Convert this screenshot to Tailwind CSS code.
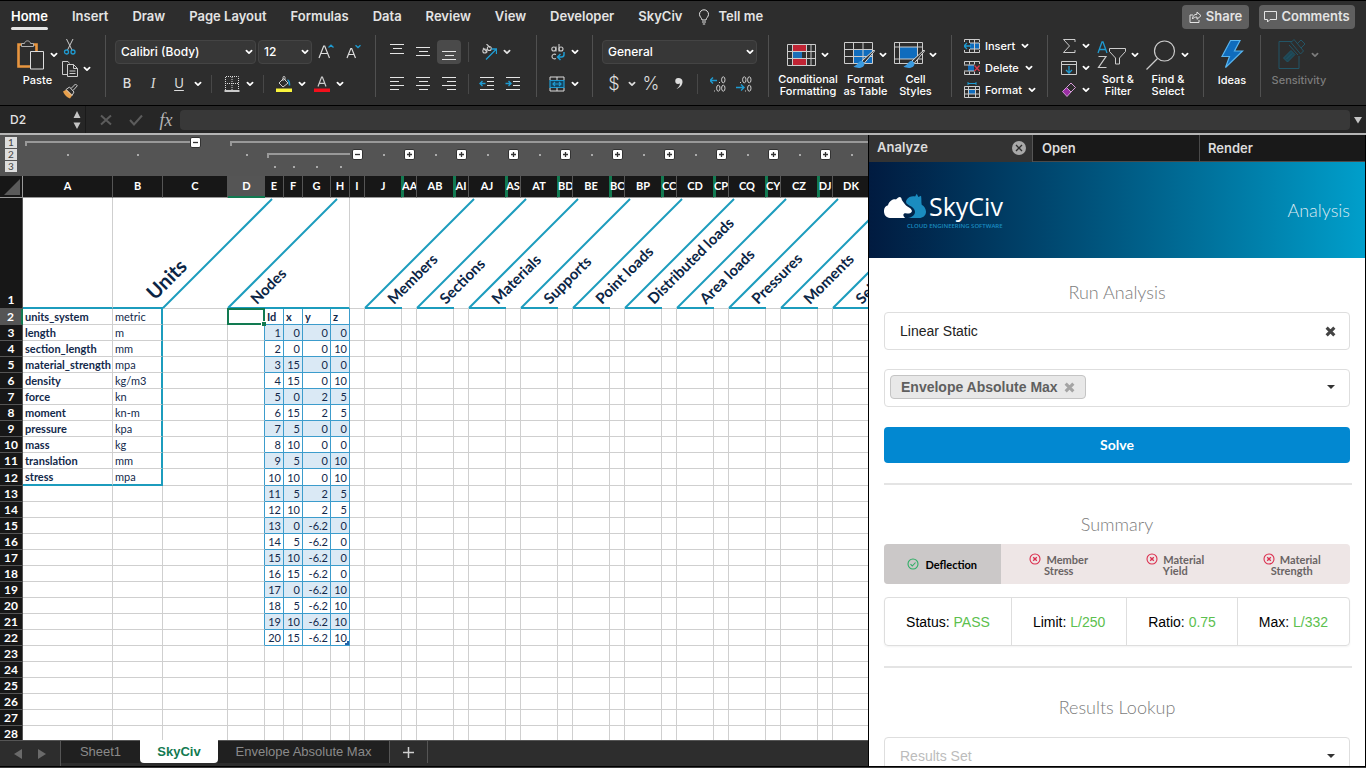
<!DOCTYPE html>
<html lang="en">
<head>
  <meta charset="UTF-8" />
  <meta name="viewport" content="width=device-width, initial-scale=1" />
  <title>SkyCiv Workbook</title>
  <script src="https://cdn.jsdelivr.net/npm/@tailwindcss/browser@4"></script>
</head>
<body class="h-screen flex flex-col overflow-hidden bg-[#2d2d2d] text-[#e4e4e4] font-['Inter','Liberation_Sans',sans-serif]">

  <!-- Shared icons -->
  <svg class="hidden">
    <symbol id="chev" viewBox="0 0 10 10"><path d="M2.4 3.6 5 6.2 7.600 3.600" fill="none" stroke="currentColor" stroke-width="1.700" stroke-linecap="round" stroke-linejoin="round"/></symbol>
    <symbol id="cross" viewBox="0 0 10 10"><path d="M1.500 1.500 8.500 8.500M8.500 1.500 1.500 8.500" fill="none" stroke="currentColor" stroke-width="2.800"/></symbol>
    <symbol id="fail" viewBox="0 0 12 12"><circle cx="6" cy="6" r="5" fill="none" stroke="#db2f4f" stroke-width="1.100"/><path d="M4.200 4.200 7.800 7.800M7.800 4.200 4.200 7.800" stroke="#db2f4f" stroke-width="1.300"/></symbol>
  </svg>

  <!-- Menu tabs -->
  <header class="flex h-[33px] shrink-0 items-center border-t border-black pl-[11px] pr-[11px] text-[13px] font-semibold">
    <nav class="flex items-center gap-6">
      <a href="#" class="relative text-white">Home<span class="absolute left-0 right-0 -bottom-[3px] h-[3px] rounded bg-[#e4e4e4]"></span></a>
      <a href="#">Insert</a>
      <a href="#">Draw</a>
      <a href="#">Page Layout</a>
      <a href="#">Formulas</a>
      <a href="#">Data</a>
      <a href="#">Review</a>
      <a href="#">View</a>
      <a href="#">Developer</a>
      <a href="#">SkyCiv</a>
    </nav>
    <button class="ml-4 flex items-center gap-2">
      <svg class="h-4 w-3" viewBox="0 0 12 16" fill="none" stroke="#e4e4e4"><path d="M4 11C4 9 1.500 8 1.500 5.300a4.500 4.500 0 0 1 9 0C10.500 8 8 9 8 11ZM4 13h4M4.800 15h2.400"/></svg>
      Tell me
    </button>
    <div class="ml-auto flex gap-[10px]">
      <button class="flex h-6 w-[67px] items-center justify-center gap-1 rounded bg-[#5f5f5f]">
        <svg class="h-3 w-[13px]" viewBox="0 0 13 12" fill="none" stroke="#e4e4e4"><path d="M4 4H1v7.500h9V9M8 1v2.200C5 3.400 3.600 5 3.500 8 4.500 6.500 6 6 8 6v2.300l4-3.600Z"/></svg>
        Share
      </button>
      <button class="flex h-6 w-24 items-center justify-center gap-1 rounded bg-[#5f5f5f]">
        <svg class="h-3 w-[13px]" viewBox="0 0 13 12" fill="none" stroke="#e4e4e4"><path d="M.5.5h12v8H6L3.500 11V8.500h-3Z"/></svg>
        Comments
      </button>
    </div>
  </header>

  <!-- Ribbon -->
  <section class="flex h-[73px] shrink-0 border-b border-black pt-[2px] pb-2 text-[11px] font-medium text-white">
    <!-- Clipboard -->
    <div class="flex w-[106px] shrink-0 gap-[6px] border-r border-[#505050] pl-4 pt-1">
      <button class="flex w-10 flex-col">
        <span class="flex h-8 items-center gap-[5px]">
          <svg class="h-8 w-7 shrink-0" viewBox="0 0 28 32" fill="none"><path d="M6.500 5.500H2.500V27.500H14M17 5.500H20.500V12" stroke="#e8953f" stroke-width="2.600"/><path d="M5.500 7.500V4.500H8.500C9 1 14 1 14.500 4.500H17.500V7.500Z" stroke="#b0b0b0" fill="#2d2d2d"/><path d="M14.500 12.500H27.500V30H14.500Z" stroke="#ddd" fill="#2d2d2d"/></svg>
          <svg class="h-[10px] w-[10px] shrink-0"><use href="#chev"/></svg>
        </span>
        <span class="mt-[3px] pl-[3px] leading-3">Paste</span>
      </button>
      <div class="flex flex-col gap-[6px]">
        <button aria-label="Cut"><svg class="h-4 w-4" viewBox="0 0 16 16" fill="none"><path d="M4.500 0 10 11M11 0 5.500 11" stroke="#ccc"/><circle cx="4.500" cy="13" r="2" stroke="#1f9bd1" stroke-width="1.300"/><circle cx="11" cy="13" r="2" stroke="#1f9bd1" stroke-width="1.300"/></svg></button>
        <button aria-label="Copy" class="flex items-center gap-1"><svg class="h-4 w-4" viewBox="0 0 16 16" fill="none" stroke="#ccc"><path d="M5 13.500H.5V.5h5.500l1.500 2"/><path d="M5.500 3.500h6L15.500 7.500v8h-10ZM11.500 3.500v4h4M7.500 10h6M7.500 12.500h6" /></svg><svg class="h-[10px] w-[10px]"><use href="#chev"/></svg></button>
        <button aria-label="Format painter"><svg class="h-4 w-4" viewBox="0 0 16 16" fill="none"><path d="M1 8.500 4.500 6.500 10.500 12 8 15.500C5 14.500 2.500 12 1 8.500Z" fill="#e8a04c"/><path d="M4 6.500 7.500 4 12 9 10 12.500ZM9 5.500 13.500 1 15.300 2.800 11 7.500" stroke="#ccc"/></svg></button>
      </div>
    </div>

    <!-- Font -->
    <div class="flex w-[270px] shrink-0 flex-col gap-2 border-r border-[#505050] pl-[9px] pt-[5px]">
      <div class="flex h-6 items-center">
        <div class="relative">
          <select aria-label="Font" class="h-6 w-[141px] appearance-none rounded-sm border border-[#444] bg-[#373737] pl-[5px] text-xs"><option>Calibri (Body)</option></select>
          <svg class="pointer-events-none absolute right-[2px] top-[7px] h-[10px] w-[10px]"><use href="#chev"/></svg>
        </div>
        <div class="relative ml-[2px]">
          <select aria-label="Font size" class="h-6 w-[54px] appearance-none rounded-sm border border-[#444] bg-[#373737] pl-[5px] text-xs"><option>12</option></select>
          <svg class="pointer-events-none absolute right-[2px] top-[7px] h-[10px] w-[10px]"><use href="#chev"/></svg>
        </div>
        <button aria-label="Increase font" class="ml-[6px]"><svg class="h-5 w-4" viewBox="0 0 16 20" fill="none"><path d="M1 16 5.700 4h1L11.500 16M3 11.500h6.500" stroke="#ddd" stroke-width="1.200"/><path d="M10.500 5.500 13 3.200l2.500 2.300" stroke="#1f9bd1" stroke-width="1.300"/></svg></button>
        <button aria-label="Decrease font" class="ml-3"><svg class="h-5 w-4" viewBox="0 0 16 20" fill="none"><path d="M1 16 4.800 6.500h.9L9.500 16M2.500 12.500h5.500" stroke="#ddd" stroke-width="1.200"/><path d="M9.500 3.200 12 5.500l2.500-2.300" stroke="#1f9bd1" stroke-width="1.300"/></svg></button>
      </div>
      <div class="flex h-6 items-center">
        <button class="w-6 text-[13px] text-[#ddd]">B</button>
        <button class="w-7 font-['Liberation_Serif',serif] text-sm italic text-[#ddd]">I</button>
        <button class="w-6 text-[13px] font-normal text-[#ddd] underline underline-offset-2">U</button>
        <button aria-label="Underline styles" class="ml-[2px]"><svg class="h-[10px] w-[10px]"><use href="#chev"/></svg></button>
        <span class="ml-2 mr-3 h-[18px] w-px bg-[#484848]"></span>
        <button aria-label="Borders" class="flex items-center gap-[5px]"><svg class="h-4 w-4" viewBox="0 0 16 16" fill="none"><path d="M1.500 14V.5h13V14M8 1v13M1 7.500h14" stroke="#ddd" stroke-dasharray="1 1"/><path d="M.5 15h15" stroke="#fff" stroke-width="1.500"/></svg><svg class="h-[10px] w-[10px]"><use href="#chev"/></svg></button>
        <span class="ml-2 mr-3 h-[18px] w-px bg-[#484848]"></span>
        <button aria-label="Fill colour" class="flex items-center gap-[5px]"><svg class="h-4 w-4" viewBox="0 0 16 16" fill="none"><path d="M0 12.500h16v3.500H0Z" fill="#f9f43c"/><path d="M3 7 7.500 2.500 12 7 7 11ZM7 5V1.500c0-1.500 2-1.500 2 0V4" stroke="#ccc"/><path d="M11.500 4c2 .5 2 3 2 5.500" stroke="#1f9bd1" stroke-width="1.600"/></svg><svg class="h-[10px] w-[10px]"><use href="#chev"/></svg></button>
        <button aria-label="Font colour" class="ml-[7px] flex items-center gap-[5px]"><svg class="h-4 w-4" viewBox="0 0 16 16" fill="none"><path d="M0 12.500h16v3.500H0Z" fill="#f3101c"/><path d="M4 10.500 7.600 1h.8L12 10.500M5.300 7.300h5.400" stroke="#ccc" stroke-width="1.200"/></svg><svg class="h-[10px] w-[10px]"><use href="#chev"/></svg></button>
      </div>
    </div>

    <!-- Alignment -->
    <div class="flex w-[161px] shrink-0 flex-col gap-2 border-r border-[#505050] pl-[9px] pt-[5px] text-[#e4e4e4]">
      <div class="flex h-6 items-center gap-[2px]">
        <button aria-label="Top align" class="h-6 w-6"><svg class="h-6 w-6" viewBox="0 0 24 24"><path d="M5 4.500h14M8 8.500h9M5 13.500h14" stroke="currentColor"/></svg></button>
        <button aria-label="Middle align" class="h-6 w-6"><svg class="h-6 w-6" viewBox="0 0 24 24"><path d="M5 7.500h14M8 11.500h9M5 15.500h14" stroke="currentColor"/></svg></button>
        <button aria-label="Bottom align" class="h-6 w-6 rounded-sm bg-[#4a4a4a]"><svg class="h-6 w-6" viewBox="0 0 24 24"><path d="M5 11.500h14M8 15.500h9M5 19.500h14" stroke="currentColor"/></svg></button>
        <span class="ml-[5px] mr-[10px] h-5 w-px bg-[#484848]"></span>
        <button aria-label="Orientation" class="flex items-center gap-[5px]"><svg class="h-4 w-4" viewBox="0 0 16 16" fill="none"><g stroke="#ccc" stroke-width="1.100"><circle cx="3.800" cy="7" r="2"/><path d="M2 3.800 6.300 8.300"/><circle cx="8.300" cy="4.500" r="2"/><path d="M5.500 0 9 3.500"/></g><path d="M5 15.500 15 5.500M10.500 5h5v5" stroke="#1f9bd1" stroke-width="1.300"/></svg><svg class="h-[10px] w-[10px]"><use href="#chev"/></svg></button>
      </div>
      <div class="flex h-6 items-center gap-[2px]">
        <button aria-label="Align left" class="h-6 w-6"><svg class="h-6 w-6" viewBox="0 0 24 24"><path d="M5 5.500h14M5 9.500h9M5 13.500h14M5 17.500h9" stroke="currentColor"/></svg></button>
        <button aria-label="Center" class="h-6 w-6"><svg class="h-6 w-6" viewBox="0 0 24 24"><path d="M5 5.500h14M8 9.500h9M5 13.500h14M8 17.500h9" stroke="currentColor"/></svg></button>
        <button aria-label="Align right" class="h-6 w-6"><svg class="h-6 w-6" viewBox="0 0 24 24"><path d="M5 5.500h14M10 9.500h9M5 13.500h14M10 17.500h9" stroke="currentColor"/></svg></button>
        <span class="ml-[5px] mr-1 h-5 w-px bg-[#484848]"></span>
        <button aria-label="Decrease indent" class="h-6 w-6"><svg class="h-6 w-6" viewBox="0 0 24 24" fill="none"><path d="M5 5.500h14M12 9.500h7M12 13.500h7M5 17.500h14" stroke="currentColor"/><path d="M5 11.500h5.500M7.500 9 5 11.500 7.500 14" stroke="#1f9bd1" stroke-width="1.400"/></svg></button>
        <button aria-label="Increase indent" class="h-6 w-6"><svg class="h-6 w-6" viewBox="0 0 24 24" fill="none"><path d="M5 5.500h14M12 9.500h7M12 13.500h7M5 17.500h14" stroke="currentColor"/><path d="M4.500 11.500H10M7.500 9 10 11.500 7.500 14" stroke="#1f9bd1" stroke-width="1.400"/></svg></button>
      </div>
    </div>

    <!-- Wrap and merge -->
    <div class="flex w-[56px] shrink-0 flex-col gap-2 border-r border-[#505050] pl-3 pt-[5px]">
      <button aria-label="Wrap text" class="flex h-6 items-center gap-[5px]"><svg class="h-[18px] w-4" viewBox="0 0 16 18" fill="none"><g stroke="#ccc" stroke-width="1.100"><circle cx="4.800" cy="6" r="2"/><path d="M7 3.500V8.500M10 1v7.500"/><circle cx="12" cy="6" r="2"/><path d="M7 11.500c-2-1-4 0-4 2s2 3 4 2"/></g><path d="M15 9v2.500c0 1.500-1 2.500-2.500 2.500H8.500M11.500 11 8.500 14l3 3" stroke="#1f9bd1" stroke-width="1.500"/></svg><svg class="h-[10px] w-[10px]"><use href="#chev"/></svg></button>
      <button aria-label="Merge" class="flex h-6 items-center gap-[5px]"><svg class="h-4 w-4" viewBox="0 0 16 16" fill="none"><path d="M1 4.500h14v7H1Z" fill="#15455f"/><path d="M1 4V1h14v3M8 1v3M1 12v3h14v-3M8 12v3" stroke="#ddd"/><path d="M1 4.500h14v7H1ZM4 8h8M6 6 4 8l2 2M10 6l2 2-2 2" stroke="#1f9bd1" stroke-width="1.200"/></svg><svg class="h-[10px] w-[10px]"><use href="#chev"/></svg></button>
    </div>

    <!-- Number -->
    <div class="flex w-[176px] shrink-0 flex-col gap-2 border-r border-[#505050] pl-[9px] pt-[5px]">
      <div class="relative w-[155px]">
        <select aria-label="Number format" class="h-6 w-full appearance-none rounded-sm border border-[#444] bg-[#373737] pl-[5px] text-xs"><option>General</option></select>
        <svg class="pointer-events-none absolute right-[2px] top-[7px] h-[10px] w-[10px]"><use href="#chev"/></svg>
      </div>
      <div class="flex h-6 items-center font-normal text-[#ddd]">
        <button class="w-6 text-lg font-light">$</button>
        <button aria-label="Currencies" class="ml-[1px]"><svg class="h-[10px] w-[10px]"><use href="#chev"/></svg></button>
        <button class="ml-[3px] w-[22px] text-lg font-light">%</button>
        <button aria-label="Comma style" class="ml-[9px]"><svg class="h-4 w-4" viewBox="0 0 16 16"><path d="M7.500 2A3 3 0 0 0 7 8c1 0 1.500-.2 2-.5C8.800 9.500 8 11 5.500 13c3.500-1.200 6-4 6-7.300C11.500 3.200 9.800 2 7.500 2Z" fill="#ddd"/></svg></button>
        <span class="ml-[10px] mr-3 h-5 w-px bg-[#484848]"></span>
        <button aria-label="Increase decimal"><svg class="h-4 w-4" viewBox="0 0 16 16" fill="none"><path d="M0 4.500h7M3 1.500 0 4.500l3 3" stroke="#1f9bd1" stroke-width="1.400"/><g stroke="#ccc"><ellipse cx="13.300" cy="3.800" rx="1.700" ry="3"/><ellipse cx="8.300" cy="12.200" rx="1.700" ry="3"/><ellipse cx="13.300" cy="12.200" rx="1.700" ry="3"/><path d="M9 6.500h1M4 15h1"/></g></svg></button>
        <button aria-label="Decrease decimal" class="ml-[10px]"><svg class="h-4 w-4" viewBox="0 0 16 16" fill="none"><path d="M0 11.500h8M5 8.500l3 3-3 3" stroke="#1f9bd1" stroke-width="1.400"/><g stroke="#ccc"><ellipse cx="8.300" cy="3.800" rx="1.700" ry="3"/><ellipse cx="13.300" cy="3.800" rx="1.700" ry="3"/><ellipse cx="13.300" cy="12.200" rx="1.700" ry="3"/><path d="M4 6.500h1M9 15h1"/></g></svg></button>
      </div>
    </div>

    <!-- Styles -->
    <div class="flex w-[183px] shrink-0 gap-[3px] border-r border-[#505050] pl-2 pt-1">
      <button class="flex w-[62px] flex-col items-center">
        <span class="flex h-8 items-center gap-1">
          <svg class="h-[22px] w-[29px]" viewBox="0 0 29 22" fill="none"><path d="M6 1h13v6H6ZM6 15h13v6H6Z" fill="#c02434"/><path d="M6 8h9v6H6Z" fill="#1b6fb8"/><path d="M.5.5h28v21H.5ZM.5 7.500h28M.5 14.500h28M5.500.5v21M19.500.5v21M24 .5v21" stroke="#ccc"/></svg>
          <svg class="h-[10px] w-[10px]"><use href="#chev"/></svg>
        </span>
        <span class="mt-[3px] leading-3">Conditional<br>Formatting</span>
      </button>
      <button class="flex w-[47px] flex-col items-center">
        <span class="flex h-8 items-center gap-[3px]">
          <svg class="h-7 w-[31px]" viewBox="0 0 31 28" fill="none"><path d="M10 9h18v14H10Z" fill="#0f6cbd"/><path d="M.5 1.500h28v21H.5ZM.5 8.500h28M.5 15.500h28M9.500 1.500v21M19 1.500v21" stroke="#ccc"/><path d="M30 9 18 20l2 2.500L30.500 10Z" fill="#2d2d2d" stroke="#ddd"/><path d="M18.500 20c-4-1-4 4-9 5.500 4 2.500 11 2 11-3Z" fill="#3b9be0"/></svg>
          <svg class="h-[10px] w-[10px]"><use href="#chev"/></svg>
        </span>
        <span class="mt-[3px] leading-3 whitespace-nowrap">Format<br>as Table</span>
      </button>
      <button class="flex w-[47px] flex-col items-center">
        <span class="flex h-8 items-center gap-[3px]">
          <svg class="h-7 w-[31px]" viewBox="0 0 31 28" fill="none"><path d="M6 6h17v12H6Z" fill="#0f6cbd"/><path d="M.5 1.500h28v21H.5ZM.5 6h28M.5 18h28M5.500 1.500v21M23.500 1.500v21" stroke="#ccc"/><path d="M30 9 18 20l2 2.500L30.500 10Z" fill="#2d2d2d" stroke="#ddd"/><path d="M18.500 20c-4-1-4 4-9 5.500 4 2.500 11 2 11-3Z" fill="#3b9be0"/></svg>
          <svg class="h-[10px] w-[10px]"><use href="#chev"/></svg>
        </span>
        <span class="mt-[3px] leading-3">Cell<br>Styles</span>
      </button>
    </div>

    <!-- Cells -->
    <div class="flex w-24 shrink-0 flex-col gap-[6px] border-r border-[#505050] pl-3 pt-[3px]">
      <button class="flex h-4 items-center gap-[5px]"><svg class="h-4 w-4" viewBox="0 0 16 16" fill="none"><path d="M6 5h10v6H6Z" fill="#0f6cbd"/><path d="M.5 4V1.500h15V4M5.500 1.500V5M10.500 1.500V5M.5 12v2.500h15V12M5.500 11v3.500M10.500 11v3.500M6 5h9.500v6H6M10.500 5v6" stroke="#ccc"/><path d="M0 8h7M3 5 0 8l3 3" stroke="#1f9bd1" stroke-width="1.300"/></svg>Insert<svg class="h-[10px] w-[10px]"><use href="#chev"/></svg></button>
      <button class="flex h-4 items-center gap-[5px]"><svg class="h-4 w-4" viewBox="0 0 16 16" fill="none"><path d="M4 5h6v6H4Z" fill="#0f6cbd"/><path d="M.5 4.500V1.500h15V4M5.500 1.500v3M10.500 1.500v3M.5 11.500v3h15V12M5.500 11.500v3M10.500 11.500v3M0 5h10M0 11h10" stroke="#ccc"/><path d="M10.500 5.500 15.500 11M15.500 5.500 10.500 11" stroke="#d83b4e" stroke-width="1.300"/></svg>Delete<svg class="h-[10px] w-[10px]"><use href="#chev"/></svg></button>
      <button class="flex h-4 items-center gap-[5px]"><svg class="h-4 w-4" viewBox="0 0 16 16" fill="none"><path d="M4 7h7v5H4Z" fill="#0f6cbd"/><path d="M.5 4.500h15v11H.5ZM.5 7.500h15M.5 12h15M4.500 4.500v11M11.500 4.500v11" stroke="#ccc"/><path d="M4 1.500h8M4 0v3M12 0v3" stroke="#1f9bd1"/></svg>Format<svg class="h-[10px] w-[10px]"><use href="#chev"/></svg></button>
    </div>

    <!-- Editing -->
    <div class="flex w-[156px] shrink-0 border-r border-[#505050] pl-[13px]">
      <div class="flex flex-col gap-[6px] pt-[3px]">
        <button aria-label="AutoSum" class="flex h-4 items-center gap-1"><svg class="h-4 w-4" viewBox="0 0 16 16" fill="none"><path d="M14 4V1.500H2.500L8.500 8l-6 6.500H14V12" stroke="#ccc"/></svg><svg class="h-[10px] w-[10px]"><use href="#chev"/></svg></button>
        <button aria-label="Fill" class="flex h-4 items-center gap-1"><svg class="h-4 w-4" viewBox="0 0 16 16" fill="none"><path d="M.5 1.500h15v13H.5ZM.5 4.500h15" stroke="#ccc"/><path d="M8 6v6.500M5 10l3 3 3-3" stroke="#1f9bd1" stroke-width="1.300"/></svg><svg class="h-[10px] w-[10px]"><use href="#chev"/></svg></button>
        <button aria-label="Clear" class="flex h-4 items-center gap-1"><svg class="h-4 w-4" viewBox="0 0 16 16" fill="none" stroke="#d59ad8"><path d="M1.500 9.500 5.500 5.500 10 10 6 14.500Z" fill="#9b2fa5"/><path d="M5.500 5.500 10 1l4.500 4.500L10 10"/></svg><svg class="h-[10px] w-[10px]"><use href="#chev"/></svg></button>
      </div>
      <button class="ml-[2px] flex w-[50px] flex-col items-center pt-1">
        <span class="flex h-8 items-center gap-1">
          <svg class="h-7 w-[29px]" viewBox="0 0 29 28" fill="none"><path d="M1 12 5 1h1l4 11M2.500 8.500h6" stroke="#1f9bd1" stroke-width="1.300"/><path d="M1.500 15.500H9L1.500 26.500H9.500" stroke="#ccc" stroke-width="1.200"/><path d="M12.500 7.500h16v3L22.500 17v6h-4v-6l-6-6.500Z" stroke="#ccc"/></svg>
          <svg class="h-[10px] w-[10px]"><use href="#chev"/></svg>
        </span>
        <span class="mt-[3px] leading-3 whitespace-nowrap">Sort &amp;<br>Filter</span>
      </button>
      <button class="flex w-[50px] flex-col items-center pt-1">
        <span class="flex h-8 items-center gap-1">
          <svg class="h-[30px] w-[30px]" viewBox="0 0 30 30" fill="none" stroke="#ccc" stroke-width="1.200"><circle cx="18.500" cy="11" r="10"/><path d="M11.500 18.500.5 29.500"/></svg>
          <svg class="h-[10px] w-[10px]"><use href="#chev"/></svg>
        </span>
        <span class="mt-[3px] leading-3 whitespace-nowrap">Find &amp;<br>Select</span>
      </button>
    </div>

    <!-- Ideas -->
    <div class="flex w-[57px] shrink-0 justify-center border-r border-[#505050] pt-1">
      <button class="flex flex-col items-center">
        <svg class="h-8 w-6" viewBox="0 0 24 32"><path d="M10.500 1.500H20L14.500 12H22.500L5.500 28.500 9.500 17.500H2Z" fill="#0f6cbd" stroke="#58b4ee" stroke-width="1.200"/></svg>
        <span class="mt-[3px] leading-3">Ideas</span>
      </button>
    </div>

    <!-- Sensitivity -->
    <div class="flex w-[76px] shrink-0 justify-center pt-1 text-[#7c7c7c]">
      <button class="flex flex-col items-center" disabled>
        <span class="flex h-8 items-center gap-1">
          <svg class="h-8 w-7" viewBox="0 0 28 32" fill="none" stroke="#235566"><path d="M14 2.500H1V29.500H21V17"/><path d="M5.500 19 13 11.500l4 4L9.500 23ZM8.500 20 14 14.500" fill="#1d4654"/><path d="M13 3.500 16 .5 25.500 12l-3 3ZM19 5l4-4 4 4-4 4M11 6l9 10" /></svg>
          <svg class="h-[10px] w-[10px]"><use href="#chev"/></svg>
        </span>
        <span class="mt-[3px] leading-3">Sensitivity</span>
      </button>
    </div>
  </section>

  <!-- Formula bar -->
  <section class="flex h-[27px] shrink-0 items-center bg-[#262626]">
    <div class="flex h-full w-[86px] items-center justify-between border-r border-[#1a1a1a] pl-[10px] pr-1">
      <input aria-label="Name box" value="D2" class="w-12 text-xs font-medium" />
      <svg class="h-5 w-2" viewBox="0 0 8 20" fill="#c4c4c4"><path d="M4 1 7.500 8h-7ZM4 19 .5 12.500h7Z"/></svg>
    </div>
    <button aria-label="Cancel" class="ml-3"><svg class="h-4 w-4" viewBox="0 0 16 16"><path d="M3 3.500 13 12.500M13 3.500 3 12.500" stroke="#5c5c5c" stroke-width="2"/></svg></button>
    <button aria-label="Enter" class="ml-[14px]"><svg class="h-4 w-4" viewBox="0 0 16 16" fill="none"><path d="M2 8 6 12.500 14 3.500" stroke="#5c5c5c" stroke-width="2"/></svg></button>
    <button class="ml-[10px] mr-[2px] w-6 font-['Liberation_Serif',serif] text-lg leading-4 italic text-[#b4b4b4]">fx</button>
    <input aria-label="Formula" class="h-5 flex-1 rounded-sm bg-[#383838]" />
    <button aria-label="Expand formula bar" class="w-4 pl-[3px]"><svg class="h-2 w-[10px]" viewBox="0 0 10 8"><path d="M1 1h8L5 7.500Z" fill="#c4c4c4"/></svg></button>
  </section>

  <main class="flex min-h-0 flex-1 border-t-2 border-[#b5b5b5] font-['Lato','Liberation_Sans',sans-serif]">

    <!-- Spreadsheet -->
    <section class="flex min-w-0 flex-1 flex-col overflow-hidden bg-white">
      <div class="flex h-[41px] shrink-0 bg-[#545454]">
        <div class="flex w-[23px] shrink-0 flex-col gap-px pl-[5px] pt-[2px]">
          <button class="h-[11px] w-3 bg-[#dedede] text-[10px] leading-[11px] text-[#444]">1</button>
          <button class="h-[11px] w-3 bg-[#dedede] text-[10px] leading-[11px] text-[#444]">2</button>
          <button class="h-[11px] w-3 bg-[#dedede] text-[10px] leading-[11px] text-[#444]">3</button>
        </div>
        <div id="outline" class="flex min-w-0 flex-1 flex-col overflow-hidden pt-[2px]"></div>
      </div>
      <div class="min-h-0 flex-1 overflow-hidden">
        <table id="sheet" class="table-fixed border-separate border-spacing-0 text-[#12294b]"></table>
      </div>
      <!-- Sheet tabs -->
      <div class="flex h-[26px] shrink-0 border-t border-[#555] bg-[#2d2d2d] font-['Liberation_Sans',sans-serif] text-[13px] text-[#8a8a8a]">
        <div class="flex w-[61px] items-center gap-4 border-r border-[#555] pl-[14px]">
          <button aria-label="Previous sheet"><svg class="h-[10px] w-2" viewBox="0 0 8 10"><path d="M8 0v10L0 5Z" fill="#6a6a6a"/></svg></button>
          <button aria-label="Next sheet"><svg class="h-[10px] w-2" viewBox="0 0 8 10"><path d="M0 0v10l8-5Z" fill="#6a6a6a"/></svg></button>
        </div>
        <button class="h-[22px] w-[79px] bg-[#202020]">Sheet1</button>
        <button class="-mt-px h-[23px] w-[78px] rounded-b-sm bg-white font-bold text-[#127a51]">SkyCiv</button>
        <button class="h-[22px] w-[172px] border-r border-[#555] bg-[#202020]">Envelope Absolute Max</button>
        <button aria-label="Add sheet" class="flex h-[22px] w-[38px] items-center justify-center border-r border-[#555]"><svg class="h-[11px] w-[11px]" viewBox="0 0 11 11"><path d="M5.500 0v11M0 5.500h11" stroke="#d0d0d0" stroke-width="1.500"/></svg></button>
      </div>
    </section>

    <!-- Task pane -->
    <aside class="flex w-[498px] shrink-0 flex-col overflow-hidden border-x border-black bg-white text-[#222]">
      <nav class="flex h-[27px] shrink-0 bg-[#191919] font-['Inter',sans-serif] text-[13px] font-semibold text-[#dcdcdc]">
        <div class="flex w-[164px] items-start justify-between border-r border-[#555] bg-[#333] pl-2 pr-[6px]">
          <button class="leading-6">Analyze</button>
          <button aria-label="Close Analyze" class="pt-[6px]"><svg class="h-[14px] w-[14px]" viewBox="0 0 14 14"><circle cx="7" cy="7" r="7" fill="#a8a8a8"/><path d="M4 4l6 6M10 4l-6 6" stroke="#2d2d2d" stroke-width="1.300"/></svg></button>
        </div>
        <button class="flex-1 border-b border-[#4a4a4a] pl-[9px] text-left leading-6">Open</button>
        <button class="flex-1 border-b border-l border-[#4a4a4a] pl-2 text-left leading-6">Render</button>
      </nav>
      <header class="flex h-24 shrink-0 items-center justify-between bg-linear-to-r from-[#011b40] to-[#009fcb] px-[15px]">
        <div class="flex flex-col">
          <div class="flex items-center gap-[2px]">
            <svg class="h-[26px] w-[43px]" viewBox="54 188 130 76"><path d="M72 262C50 262 48 228 66 224 70 208 84 204 90 206L97 200C103 196 107 200 108 208 114 216 118 224 126 228 136 233 142 240 136 246 130 252 122 246 117 248 110 250 112 258 118 262Z" fill="#fff"/><path d="M122 208C128 197 140 195 148 197L153 189 158 199 166 195C168 206 166 212 168 222 184 230 188 258 164 262L126 262C146 260 154 244 142 232 133 223 116 222 122 208Z" fill="#1a8cc0"/></svg>
            <span class="font-['Open_Sans',sans-serif] text-[25px] leading-8 text-white">SkyCiv</span>
          </div>
          <span class="pl-[23px] font-['Open_Sans',sans-serif] text-[6px] leading-[8px] font-semibold text-[#1a8cc0]">CLOUD ENGINEERING SOFTWARE</span>
        </div>
        <span class="text-lg font-light text-[#dbe9f2]">Analysis</span>
      </header>
      <form class="flex flex-col px-[15px]">
        <h2 class="mt-5 text-center text-lg leading-7 font-light text-[#7c7c7c]">Run Analysis</h2>
        <div class="mt-[6px] flex h-[38px] items-center rounded border border-[#dedede] px-[13px] pl-[15px] font-['Liberation_Sans',sans-serif] text-sm">
          <input aria-label="Analysis type" value="Linear Static" class="flex-1" />
          <button type="button" aria-label="Clear analysis type"><svg class="h-[11px] w-[11px] text-[#444]"><use href="#cross"/></svg></button>
        </div>
        <div class="mt-[19px] flex h-[38px] items-center justify-between rounded border border-[#dedede] pl-[5px] pr-[14px] pb-[2px] font-['Liberation_Sans',sans-serif]">
          <span class="flex h-6 items-center gap-[6px] rounded-sm border border-[#c4c4c4] bg-[#e8e8e8] px-[10px] text-sm font-bold text-[#5f5f5f]">Envelope Absolute Max
            <button type="button" aria-label="Remove"><svg class="h-[11px] w-[11px] text-[#a4a4a4]"><use href="#cross"/></svg></button>
          </span>
          <button type="button" aria-label="Open list"><svg class="h-1 w-2" viewBox="0 0 8 4"><path d="M0 0h8L4 4Z" fill="#333"/></svg></button>
        </div>
        <button type="button" class="mt-5 h-9 rounded bg-[#0288d1] text-sm font-bold text-white">Solve</button>
        <hr class="mt-5 -mr-[2px] border-t-2 border-[#e4e4e4]" />

        <h2 class="mt-[25px] text-center text-lg leading-7 font-light text-[#7c7c7c]">Summary</h2>
        <div class="mt-[6px] flex h-10 overflow-hidden rounded bg-[#eee6e6] text-[11px] leading-[11px] font-bold text-[#6a6464]">
          <button type="button" class="flex flex-1 items-center justify-center gap-[6px] bg-[#cbc8c8] text-black"><svg class="h-3 w-3" viewBox="0 0 12 12" fill="none" stroke="#2fae66" stroke-width="1.100"><circle cx="6" cy="6" r="5"/><path d="M3.500 6.200 5.300 8 8.500 4.500"/></svg>Deflection</button>
          <button type="button" class="flex-1"><svg class="mr-[5px] inline h-3 w-3 align-[-1px]"><use href="#fail"/></svg>Member<br>Stress</button>
          <button type="button" class="flex-1"><svg class="mr-[5px] inline h-3 w-3 align-[-1px]"><use href="#fail"/></svg>Material<br>Yield</button>
          <button type="button" class="flex-1"><svg class="mr-[5px] inline h-3 w-3 align-[-1px]"><use href="#fail"/></svg>Material<br>Strength</button>
        </div>
        <div class="mt-[13px] overflow-hidden rounded border border-[#dedede] shadow-xs">
          <table class="w-full text-center font-['Liberation_Sans',sans-serif] text-sm text-black">
            <tr class="h-[47px]">
              <td class="border-r border-[#dedede] px-5">Status: <span class="text-[#5cc04e]">PASS</span></td>
              <td class="border-r border-[#dedede] px-5">Limit: <span class="text-[#5cc04e]">L/250</span></td>
              <td class="border-r border-[#dedede] px-5">Ratio: <span class="text-[#5cc04e]">0.75</span></td>
              <td class="px-5">Max: <span class="text-[#5cc04e]">L/332</span></td>
            </tr>
          </table>
        </div>
        <hr class="mt-5 -mr-[2px] border-t-2 border-[#e4e4e4]" />

        <h2 class="mt-[25px] text-center text-lg leading-7 font-light text-[#7c7c7c]">Results Lookup</h2>
        <div class="relative mt-4">
          <select aria-label="Results set" class="h-[38px] w-full appearance-none rounded border border-[#dedede] px-[15px] font-['Liberation_Sans',sans-serif] text-sm text-[#bcbcbc]"><option>Results Set</option></select>
          <svg class="pointer-events-none absolute right-[15px] top-[17px] h-1 w-2" viewBox="0 0 8 4"><path d="M0 0h8L4 4Z" fill="#333"/></svg>
        </div>
      </form>
    </aside>
  </main>
  <div class="h-[2px] shrink-0 border-t border-black bg-[#3a3a3a]"></div>

  <script>
    // columns: name and width, title = slanted title, hidden = columns are folded before it
    const cols = [
      { n: 'A', w: 90 }, { n: 'B', w: 50 }, { n: 'C', w: 65, title: 'Units', big: true }, { n: 'D', w: 37, title: 'Nodes' },
      { n: 'E', w: 19 }, { n: 'F', w: 19 }, { n: 'G', w: 28 }, { n: 'H', w: 19 }, { n: 'I', w: 15 },
    ]
    const groups = [
      ['J', 'Members', 'AA'], ['AB', 'Sections', 'AI'], ['AJ', 'Materials', 'AS'], ['AT', 'Supports', 'BD'],
      ['BE', 'Point loads', 'BO'], ['BP', 'Distributed loads', 'CC'], ['CD', 'Area loads', 'CP'],
      ['CQ', 'Pressures', 'CY'], ['CZ', 'Moments', 'DJ'], ['DK', 'Self weight'],
    ]
    groups.forEach(([n, title, next]) => {
      cols.push({ n, w: 37, title, group: true })
      if (next) cols.push({ n: next, w: 15, hidden: true })
    })

    const units = [
      ['units_system', 'metric'], ['length', 'm'], ['section_length', 'mm'], ['material_strength', 'mpa'],
      ['density', 'kg/m3'], ['force', 'kn'], ['moment', 'kn-m'], ['pressure', 'kpa'], ['mass', 'kg'],
      ['translation', 'mm'], ['stress', 'mpa'],
    ]
    const nodes = [
      [0, 0, 0], [0, 0, 10], [15, 0, 0], [15, 0, 10], [0, 2, 5], [15, 2, 5], [5, 0, 0], [10, 0, 0], [5, 0, 10], [10, 0, 10],
      [5, 2, 5], [10, 2, 5], [0, -6.2, 0], [5, -6.2, 0], [10, -6.2, 0], [15, -6.2, 0], [0, -6.2, 10], [5, -6.2, 10], [10, -6.2, 10], [15, -6.2, 10],
    ]

    // outline levels above the columns
    const line = '<span class="mt-[4px] h-[5px] flex-1 border-t-2 border-[#999]"></span>'
    const start = '<span class="ml-[2px] mt-[4px] h-[5px] flex-1 border-t-2 border-l-2 border-[#999]"></span>'
    const dot = '<span class="mx-auto mt-[5px] h-[2px] w-[2px] bg-[#aaa]"></span>'
    const blank = '<span class="flex-1"></span>'
    const fold = (plus) => `<button aria-label="${plus ? 'Expand' : 'Collapse'}" class="h-[11px] w-[11px] shrink-0 rounded-xs border border-[#333] bg-white"><svg class="h-[9px] w-[9px]" viewBox="0 0 9 9"><path d="${plus ? 'M2 4.500h5M4.500 2v5' : 'M2 4.500h5'}" stroke="#333" stroke-width="1.300"/></svg></button>`

    function outlineCell(level, c, i) {
      if (level === 1) {
        if (c.n === 'A' || c.n === 'D') return start
        if (c.n === 'C') return line + fold(false) + blank
        return line
      }
      if (level === 2) {
        if (c.n === 'A' || c.n === 'B' || c.n === 'D' || c.group) return dot
        if (c.n === 'E') return start
        if (i > 4 && i < 8) return line
        if (c.n === 'I') return blank + fold(false) + blank
        if (c.hidden) return blank + fold(true) + blank
      }
      if (level === 3 && i > 3 && i < 8) return dot
      return ''
    }

    document.querySelector('#outline').innerHTML = [1, 2, 3].map(level =>
      '<div class="flex h-3 shrink-0">' + cols.map((c, i) => `<div class="flex shrink-0" style="width:${c.w}px">${outlineCell(level, c, i)}</div>`).join('') + '</div>'
    ).join('')

    // column headers
    let html = '<colgroup><col style="width:23px">' + cols.map(c => `<col style="width:${c.w}px">`).join('') + '</colgroup>'
    html += '<thead><tr class="h-[22px] bg-[#171717] text-[11px] font-bold text-white">'
    html += '<th class="border-r border-b border-[#999] p-0"><svg class="ml-1 h-4 w-4" viewBox="0 0 16 16"><path d="M16 0v16H0Z" fill="#5a5a5a"/></svg></th>'
    cols.forEach((c, i) => {
      let look = 'border-b border-r border-b-[#999] border-r-[#555]'
      if (c.n === 'D') look = 'border-b-2 border-[#127a51] bg-[#555]'
      if (c.group) look = 'border-b border-r border-b-[#999] border-r-[#127a51]'
      if (c.hidden) look = 'border-b border-r border-b-[#999] border-r-[#555] shadow-[inset_2px_0_0_#127a51]'
      html += `<th class="overflow-hidden p-0 text-center ${look}">${c.n}</th>`
    })
    html += '</tr></thead><tbody>'

    // row 1 with the slanted titles
    html += '<tr class="h-[111px]"><th class="border-b border-r border-[#555] bg-[#171717] p-0 align-bottom text-xs leading-[17px] font-bold text-white">1</th>'
    cols.forEach((c, i) => {
      let look = 'border-b border-[#cfcfcf]'
      if (i < 2 || (i > 2 && i < 8) || c.group) look = 'border-b-2 border-b-[#1c9cbd]'
      if (c.n === 'A' || c.n === 'H') look += ' border-r border-r-[#cfcfcf]'
      let title = ''
      if (c.title) {
        const text = c.big
          ? `<text class="text-xl font-bold" fill="#0b2545" transform="translate(-8 103) rotate(-45)">${c.title}</text>`
          : `<text class="text-[15px] font-bold" fill="#0b2545" transform="translate(29 107) rotate(-45)">${c.title}</text>`
        title = `<svg class="absolute left-0 top-0 h-[110px] w-[110px] overflow-visible"><path d="M0 110 109 1" stroke="#1c9cbd" stroke-width="2"/>${text}</svg>`
      }
      html += `<td class="relative p-0 ${look}">${title}</td>`
    })
    html += '</tr>'

    for (let r = 2; r <= 28; r++) {
      const head = r === 2 ? 'bg-[#555] border-r-2 border-r-[#127a51]' : 'bg-[#171717] border-r border-r-[#555]'
      html += `<tr class="${r === 12 ? 'h-[17px]' : 'h-4'}"><th class="border-b border-b-[#555] p-0 text-xs leading-[15px] font-bold text-white ${head}">${r}</th>`
      cols.forEach((c, i) => {
        let text = ''
        let look = 'border-r border-b border-[#cfcfcf]'
        if (i < 2 && r <= 12) {
          text = units[r - 2][i]
          look = i === 0 ? 'pl-[2px] font-bold border-r border-b border-r-[#cfcfcf]' : 'pl-[2px] border-r-2 border-b border-r-[#1c9cbd]'
          look += r === 12 ? ' border-b-2 border-b-[#1c9cbd]' : ' border-b-[#cfcfcf]'
        }
        if (c.n === 'D' && r <= 22) look = 'border-r border-b border-r-[#3c9ccc] border-b-[#cfcfcf]'
        if (i >= 4 && i <= 7 && r <= 22) {
          look = 'border-r border-b border-[#3c9ccc]'
          if (r === 2) {
            text = ['Id', 'x', 'y', 'z'][i - 4]
            look += ' pl-[2px] font-bold'
          } else {
            text = i === 4 ? r - 2 : nodes[r - 3][i - 5]
            look += ' pr-[2px] text-right'
            if (r % 2) look += ' bg-[#dae9f5]'
          }
        }
        if (c.n === 'D' && r === 2) text = '<span class="absolute -inset-x-px -top-px -bottom-px border-2 border-[#127a51]"></span><span class="absolute -right-[2px] -bottom-[2px] z-10 h-[5px] w-[5px] border-t border-l border-white bg-[#127a51]"></span>'
        if (c.n === 'H' && r === 22) text += '<span class="absolute right-0 bottom-0 h-1 w-1 border-r-2 border-b-2 border-[#2563a8]"></span>'
        html += `<td class="relative py-0 whitespace-nowrap text-[11px] leading-[15px] ${look}">${text}</td>`
      })
      html += '</tr>'
    }
    const sheet = document.querySelector('#sheet')
    sheet.style.width = cols.reduce((sum, c) => sum + c.w, 23) + 'px'
    sheet.innerHTML = html + '</tbody>'
  </script>
</body>
</html>
